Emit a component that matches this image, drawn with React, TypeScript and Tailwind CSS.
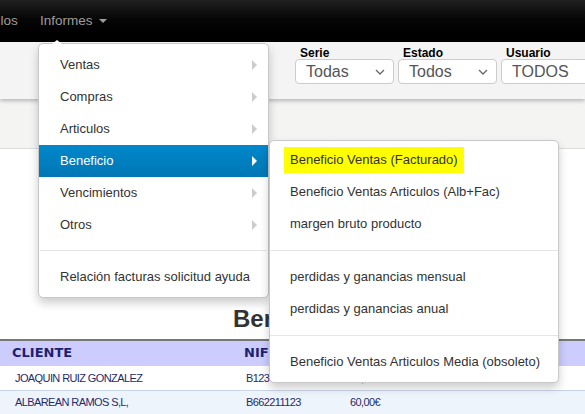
import React from 'react';

const mainItems = ['Ventas', 'Compras', 'Articulos', 'Beneficio', 'Vencimientos', 'Otros'];

function Arrow({ active }: { active?: boolean }) {
  return (
    <span
      className={`absolute right-[11px] top-1/2 -translate-y-1/2 w-0 h-0 border-y-[5px] border-y-transparent border-l-[5px] ${
        active ? 'border-l-white' : 'border-l-[#cccccc]'
      }`}
    />
  );
}

function Select({ value, chevron = true, className }: { value: string; chevron?: boolean; className: string }) {
  return (
    <div className={`h-[25px] bg-white border border-[#cccccc] rounded-[4px] flex items-center pl-[10px] pr-[8px] text-[16px] text-[#555] ${className}`}>
      <span className="flex-1">{value}</span>
      {chevron && (
        <svg width="10" height="6" viewBox="0 0 10 6" className="mt-[1px]">
          <path d="M1 1l4 4 4-4" fill="none" stroke="#666" strokeWidth="1.3" />
        </svg>
      )}
    </div>
  );
}

export default function App() {
  return (
    <div className="relative w-[585px] h-[414px] overflow-hidden bg-white font-['Liberation_Sans',Arial,sans-serif] text-[13px] text-[#333] whitespace-nowrap">
      {/* navbar */}
      <div className="h-[42px] bg-gradient-to-b from-[#202020] via-[#050505] to-black flex items-center text-[#9d9d9d] text-[13.5px]">
        <span className="-ml-[7px] w-[47px]">ulos</span>
        <span className="flex items-center gap-[6px]">
          Informes
          <span className="w-0 h-0 border-x-[4px] border-x-transparent border-t-[4px] border-t-[#9d9d9d]" />
        </span>
      </div>

      {/* filter bar */}
      <div className="h-[57px] bg-[#f4f4f4] shadow-[0_2px_4px_rgba(0,0,0,0.25)] relative z-10 flex pl-[295px] pt-[5px] gap-[4px]">
        <div className="flex flex-col">
          <span className="text-[12px] leading-[12px] text-black pl-[5px] font-semibold">Serie</span>
          <Select value="Todas" className="w-[99px]" />
        </div>
        <div className="flex flex-col">
          <span className="text-[12px] leading-[12px] text-black pl-[5px] font-semibold">Estado</span>
          <Select value="Todos" className="w-[99px]" />
        </div>
        <div className="flex flex-col">
          <span className="text-[12px] leading-[12px] text-black pl-[5px] font-semibold">Usuario</span>
          <Select value="TODOS" chevron={false} className="w-[100px]" />
        </div>
      </div>
      <div className="h-[50px] bg-[#f4f4f2] border-b border-[#dddddd]" />

      {/* content */}
      <div className="pt-[156px]">
        <div className="pl-[233px] text-[24px] font-bold leading-[28px] text-[#333]">Beneficio Ventas</div>
        <div className="mt-[6px] border-t-2 border-[#777]">
          <div className="h-[24px] bg-[#ccccff] flex items-center font-['DejaVu_Sans',sans-serif] font-bold text-[13px] text-[#1f1f70]">
            <span className="pl-[12px] w-[244px]">CLIENTE</span>
            <span>NIF</span>
          </div>
          <div className="h-[25px] flex items-center text-[11px] tracking-[-0.6px] text-[#1f2a6e] border-t border-[#c8d4e8]">
            <span className="pl-[15px] w-[246px]">JOAQUIN RUIZ GONZALEZ</span>
            <span className="w-[104px]">B12345678</span>
            <span>60,00€</span>
          </div>
          <div className="h-[24px] flex items-center text-[11px] tracking-[-0.6px] text-[#1f2a6e] bg-[#eef4fc] border-t border-[#c8d4e8]">
            <span className="pl-[15px] w-[246px]">ALBAREAN RAMOS S,L,</span>
            <span className="w-[104px]">B662211123</span>
            <span>60,00€</span>
          </div>
        </div>
      </div>

      {/* main dropdown */}
      <div className="absolute left-[38px] top-[43px] w-[231px] z-20 bg-white border border-[#c8c8c8] rounded-[5px] shadow-[0_5px_10px_rgba(0,0,0,0.2)] pt-[5px] pb-[4px]">
        <span className="absolute -top-[4px] left-[13px] w-0 h-0 border-x-[5px] border-x-transparent border-b-[4px] border-b-white" />
        {mainItems.map((item) => {
          const active = item === 'Beneficio';
          return (
            <div
              key={item}
              className={`relative h-[32px] flex items-center pl-[21px] ${
                active ? 'bg-gradient-to-b from-[#0088cc] to-[#0077b3] text-white' : 'text-[#333]'
              }`}
            >
              {item}
              <Arrow active={active} />
            </div>
          );
        })}
        <div className="mt-[9px] mb-[10px] h-px bg-[#e5e5e5] mx-[1px]" />
        <div className="h-[32px] flex items-center pl-[21px]">Relación facturas solicitud ayuda</div>
      </div>

      {/* submenu */}
      <div className="absolute left-[269px] top-[140px] w-[290px] z-30 bg-white border border-[#c8c8c8] rounded-[5px] shadow-[0_5px_10px_rgba(0,0,0,0.2)] pt-[3px] pb-[4px]">
        <div className="h-[32px] flex items-center pl-[14px]">
          <span className="bg-[#ffff00] px-[6px] py-[3px]">Beneficio Ventas (Facturado)</span>
        </div>
        <div className="h-[32px] flex items-center pl-[20px]">Beneficio Ventas Articulos (Alb+Fac)</div>
        <div className="h-[32px] flex items-center pl-[20px]">margen bruto producto</div>
        <div className="my-[10px] h-px bg-[#e5e5e5]" />
        <div className="h-[32px] flex items-center pl-[20px]">perdidas y ganancias mensual</div>
        <div className="h-[32px] flex items-center pl-[20px]">perdidas y ganancias anual</div>
        <div className="my-[10px] h-px bg-[#e5e5e5]" />
        <div className="h-[32px] flex items-center pl-[20px]">Beneficio Ventas Articulos Media (obsoleto)</div>
      </div>
    </div>
  );
}
